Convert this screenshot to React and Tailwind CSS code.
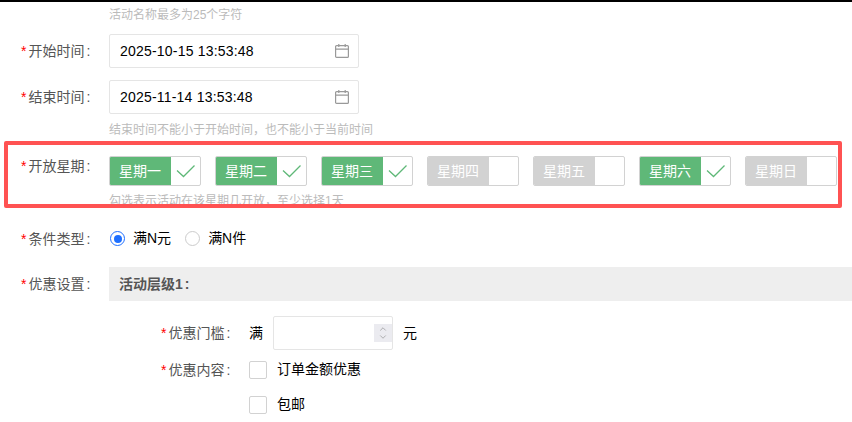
import { ChevronUp, ChevronDown } from 'lucide-react';

const days = [
  { name: '星期一', on: true },
  { name: '星期二', on: true },
  { name: '星期三', on: true },
  { name: '星期四', on: false },
  { name: '星期五', on: false },
  { name: '星期六', on: true },
  { name: '星期日', on: false },
];

function Label({ children, className = 'w-[109px] pl-[21px]' }) {
  return (
    <div className={`shrink-0 text-[14px] leading-[20px] text-[#555] ${className}`}>
      <span className="text-[#f00] mr-[2px]">*</span>
      {children}
      <span className="ml-[2px]">:</span>
    </div>
  );
}

function CalendarIcon() {
  return (
    <svg width="16" height="16" viewBox="0 0 16 16" fill="none" stroke="#999" strokeWidth="1.2">
      <rect x="1.6" y="2.6" width="12.8" height="11.8" rx="1" />
      <path d="M1.6 6.2h12.8M4.8 1v3M11.2 1v3" />
    </svg>
  );
}

function CheckMark() {
  return (
    <svg width="20" height="14" viewBox="0 0 20 14" fill="none" stroke="#5fb878" strokeWidth="1.3">
      <path d="M1 6.5L7.5 12.5L18.5 1.5" />
    </svg>
  );
}

function DateInput({ value }) {
  return (
    <div className="flex h-[34px] w-[250px] items-center justify-between rounded-[2px] border border-[#e5e5e5] pl-[10px] pr-[8px] text-[14px] tracking-[0.2px] text-black">
      {value}
      <CalendarIcon />
    </div>
  );
}

function Hint({ children, className = '' }) {
  return <p className={`ml-[109px] text-[12px] leading-[16px] text-[#bbb] ${className}`}>{children}</p>;
}

export default function App() {
  return (
    <div
      className="relative h-[422px] w-[852px] overflow-hidden border-t-2 border-black bg-white"
      style={{ fontFamily: '"Liberation Sans", "Noto Sans CJK SC", sans-serif' }}
    >
      <Hint className="mt-[5px]">活动名称最多为25个字符</Hint>

      <div className="mt-[11px] flex items-center">
        <Label>开始时间</Label>
        <DateInput value="2025-10-15 13:53:48" />
      </div>
      <div className="mt-[12px] flex items-center">
        <Label>结束时间</Label>
        <DateInput value="2025-11-14 13:53:48" />
      </div>
      <Hint className="mt-[8px]">{'结束时间不能小于开始时间\uFF0C也不能小于当前时间'}</Hint>

      <div className="mt-[18px] flex items-start">
        <Label className="w-[109px] pl-[21px]">开放星期</Label>
        <div className="flex gap-[14px]">
          {days.map((d) => (
            <div key={d.name} className="flex h-[30px] w-[92px] overflow-hidden rounded-[2px] border border-[#d2d2d2]">
              <div className={`flex w-[61px] shrink-0 items-center justify-center pr-[1px] text-[14px] text-white ${d.on ? 'bg-[#5fb878]' : 'bg-[#d2d2d2]'}`}>
                {d.name}
              </div>
              <div className="flex flex-1 items-center justify-center">
                {d.on && <CheckMark />}
              </div>
            </div>
          ))}
        </div>
      </div>
      <Hint className="mt-[7px]">{'勾选表示活动在该星期几开放\uFF0C至少选择1天'}</Hint>

      <div className="mt-[19px] flex items-center">
        <Label>条件类型</Label>
        <div className="flex items-center text-[14px] text-black">
          <span className="ml-[1px] flex h-[15px] w-[15px] items-center justify-center rounded-full border border-[#1e6fff]">
            <span className="h-[8px] w-[8px] rounded-full bg-[#1e6fff]" />
          </span>
          <span className="ml-[8px]">满N元</span>
          <span className="ml-[14px] h-[15px] w-[15px] rounded-full border border-[#ccc]" />
          <span className="ml-[8px]">满N件</span>
        </div>
      </div>

      <div className="mt-[18px] flex items-center">
        <Label>优惠设置</Label>
        <div className="flex h-[34px] flex-1 items-center bg-[#eee] pl-[10px] text-[14px] font-bold text-[#555]">
          活动层级1<span className="ml-[2px]">:</span>
        </div>
      </div>

      <div className="mt-[15px] flex items-center">
        <Label className="w-[249px] pl-[161px]">优惠门槛</Label>
        <span className="text-[14px] text-black">满</span>
        <div className="ml-[10px] flex h-[34px] w-[120px] items-center justify-end rounded-[2px] border border-[#e5e5e5]">
          <span className="flex h-[18px] w-[18px] flex-col items-center justify-center bg-[#ebebf0] text-[#888]">
            <ChevronUp size={12} strokeWidth={1.5} className="-mb-[2px]" />
            <ChevronDown size={12} strokeWidth={1.5} />
          </span>
        </div>
        <span className="ml-[10px] text-[14px] text-black">元</span>
      </div>

      <div className="mt-[9px] flex items-center">
        <Label className="w-[249px] pl-[161px]">优惠内容</Label>
        <span className="h-[18px] w-[18px] rounded-[2px] border border-[#d2d2d2]" />
        <span className="ml-[10px] text-[14px] text-black">订单金额优惠</span>
      </div>
      <div className="mt-[14px] flex items-center pl-[249px]">
        <span className="h-[18px] w-[18px] rounded-[2px] border border-[#d2d2d2]" />
        <span className="ml-[10px] text-[14px] text-black">包邮</span>
      </div>

      {/* 红色标注框 */}
      <div className="pointer-events-none absolute left-[4px] top-[139px] h-[67px] w-[838px] rounded-[2px] border-4 border-[#ff5252]" />
    </div>
  );
}
